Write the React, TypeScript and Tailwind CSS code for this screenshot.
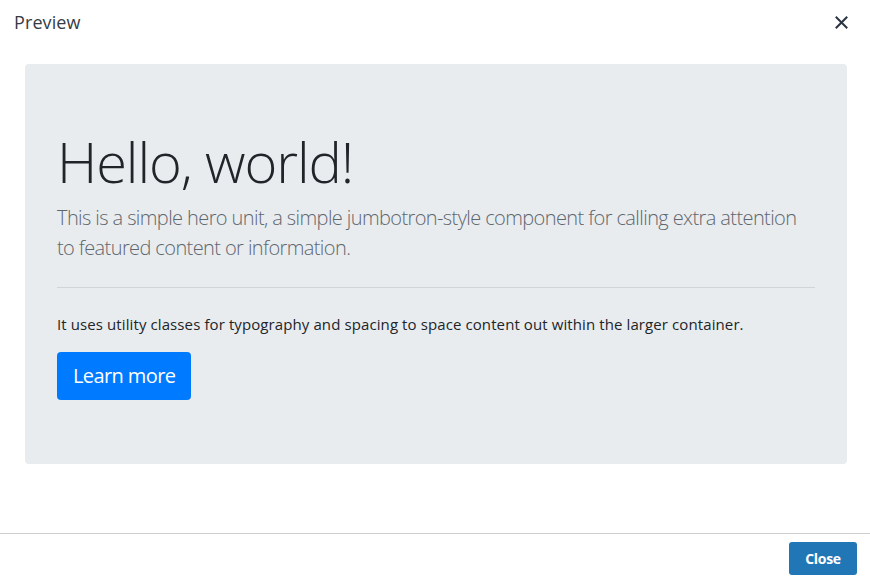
import React from "react";

export default function App() {
  const font = { fontFamily: '"Open Sans", "Noto Sans", sans-serif' };
  return (
    <div className="h-[582px] w-[870px] bg-white flex flex-col overflow-hidden" style={font}>
      <div className="h-[44px] flex items-center justify-between pl-[14px] pr-[22px]">
        <span className="text-[18px] text-[#363c45] tracking-[0.1px]">Preview</span>
        <svg width="13" height="13" viewBox="0 0 13 13" className="text-[#2b3442]">
          <path d="M1.5 1.5 L11.5 11.5 M11.5 1.5 L1.5 11.5" stroke="currentColor" strokeWidth="2" strokeLinecap="square" />
        </svg>
      </div>
      <div className="flex-1 pl-[25px] pr-[23px] pt-[20px]">
        <div className="bg-[#e9ecef] rounded-[4px] py-16 px-8">
          <h1 className="text-[56px] leading-[1.2] font-light text-[#212529] mb-2 tracking-[-1.1px]">Hello, world!</h1>
          <p className="text-[20px] leading-[30px] font-light text-[#5f676e] tracking-[-0.6px]">
            This is a simple hero unit, a simple jumbotron-style component for calling extra attention to featured content or information.
          </p>
          <hr className="my-6 border-0 border-t border-[rgba(0,0,0,0.1)]" />
          <p className="text-[15px] leading-6 text-[#212529] mb-4 tracking-[0.1px]">
            It uses utility classes for typography and spacing to space content out within the larger container.
          </p>
          <button className="bg-[#007bff] text-white text-[20px] leading-[30px] px-4 py-[9px] rounded-[4px] tracking-[-0.6px]">Learn more</button>
        </div>
      </div>
      <div className="border-t border-[#cfcfcf] h-[49px] flex items-start justify-end pr-[13px] pt-[8px]">
        <button className="bg-[#2176b5] text-white text-[14px] font-bold w-[68px] h-[33px] rounded-[3px] tracking-[-0.3px]">Close</button>
      </div>
    </div>
  );
}
